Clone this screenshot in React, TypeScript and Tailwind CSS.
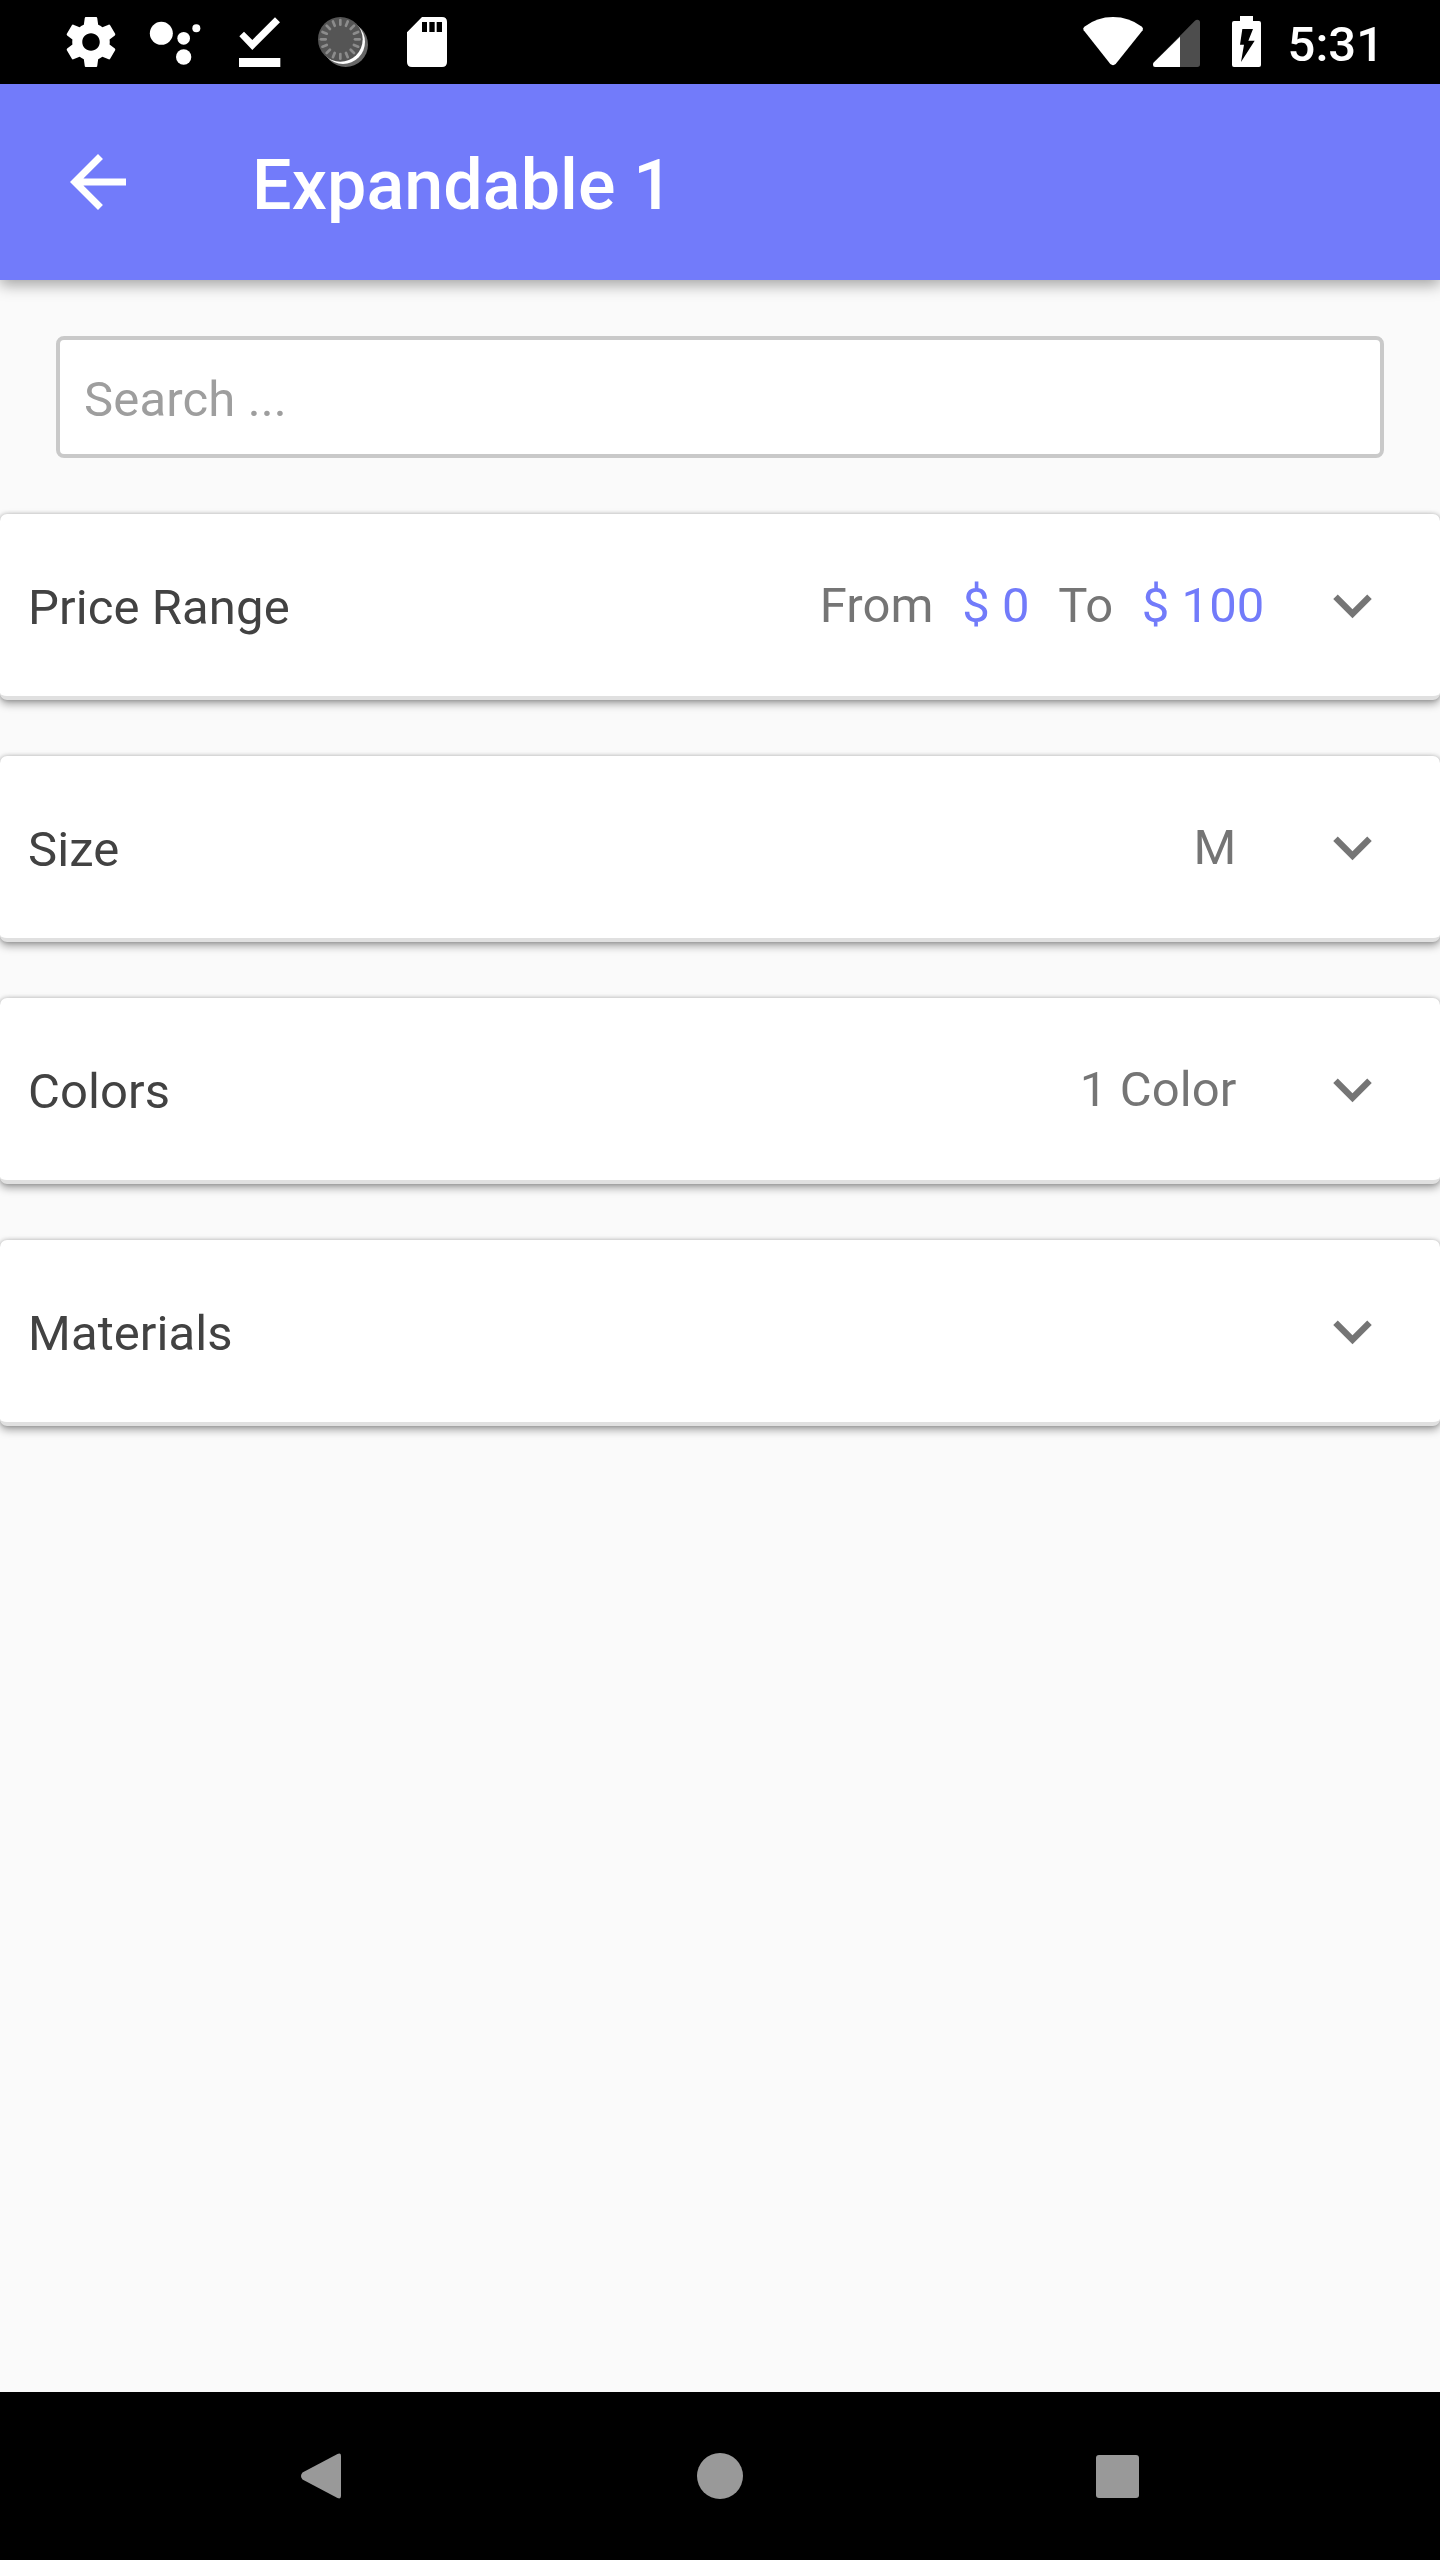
import type { ReactNode } from 'react'

function Chevron() {
  return (
    <svg viewBox="0 0 24 24" className="h-[77px] w-[77px] shrink-0" fill="#757575">
      <path d="M16.59 8.59 12 13.17 7.41 8.59 6 10l6 6 6-6z" />
    </svg>
  )
}

const ticks = Array.from({ length: 16 }, (_, i) => i * 22.5)

function StatusBar() {
  return (
    <div className="flex h-[84px] shrink-0 items-start justify-between bg-black text-white">
      <div className="flex pl-[61px] pt-3">
        <svg viewBox="0 0 24 24" className="h-[60px] w-[60px]" fill="currentColor">
          <path d="M19.43 12.98c.04-.32.07-.64.07-.98s-.03-.66-.07-.98l2.11-1.65c.19-.15.24-.42.12-.64l-2-3.46c-.12-.22-.39-.3-.61-.22l-2.49 1c-.52-.4-1.08-.73-1.69-.98l-.38-2.65C14.46 2.18 14.25 2 14 2h-4c-.25 0-.46.18-.49.42l-.38 2.65c-.61.25-1.17.59-1.69.98l-2.49-1c-.23-.09-.49 0-.61.22l-2 3.46c-.13.22-.07.49.12.64l2.11 1.65c-.04.32-.07.65-.07.98s.03.66.07.98l-2.11 1.65c-.19.15-.24.42-.12.64l2 3.46c.12.22.39.3.61.22l2.49-1c.52.4 1.08.73 1.69.98l.38 2.65c.03.24.24.42.49.42h4c.25 0 .46-.18.49-.42l.38-2.65c.61-.25 1.17-.59 1.69-.98l2.49 1c.23.09.49 0 .61-.22l2-3.46c.12-.22.07-.49-.12-.64l-2.11-1.65zM12 15.5c-1.93 0-3.5-1.57-3.5-3.5s1.57-3.5 3.5-3.5 3.5 1.57 3.5 3.5-1.57 3.5-3.5 3.5z" />
        </svg>
        <svg viewBox="243 36 249 180" className="h-[60px] w-[83px]" fill="currentColor">
          <circle cx="364" cy="100" r="34.5" />
          <circle cx="431" cy="115" r="19" />
          <circle cx="469" cy="85" r="12" />
          <circle cx="431" cy="171" r="23" />
        </svg>
        <svg viewBox="492 36 231 180" className="h-[60px] w-[77px]" fill="currentColor">
          <path d="M598 109l14-14 25 25 68-68 15 15-83 83zM597 174h124v27H597z" />
        </svg>
        <svg viewBox="723 36 279 180" className="h-[60px] w-[93px]">
          <circle cx="917" cy="134" r="67" fill="#666" />
          <circle cx="909" cy="126" r="66" fill="#fff" />
          <circle cx="901" cy="118" r="67" fill="#555" />
          {ticks.map((a) => (
            <path key={a} d="M901 60v14" stroke="#8c8c8c" strokeWidth="8" strokeLinecap="round" transform={`rotate(${a} 901 118)`} />
          ))}
        </svg>
        <svg viewBox="1002 36 279 180" className="h-[60px] w-[93px]" fill="currentColor">
          <path fillRule="evenodd" d="M1146 51h60q15 0 15 15v120q0 15-15 15h-90q-15 0-15-15V97zM1146 66v30h15V66zM1168 66v30h16V66zM1190 66v30h16V66z" />
        </svg>
      </div>
      <div className="flex pr-14 pt-3">
        <svg viewBox="60 36 201 180" className="h-[60px] w-[67px]" fill="currentColor">
          <path d="M148 192 68 91q-4-6 2-11Q108 51 156 51t87 29q5 5 2 11l-81 101q-8 7-16 0z" />
        </svg>
        <svg viewBox="261 36 219 180" className="h-[60px] w-[73px]" fill="currentColor">
          <path d="M279 187 401 63q4-4 8-4 8 0 8 8v126q0 8-8 8H283q-7 0-7-7 0-4 3-7z" fill="#4d4d4d" />
          <path d="M279 187l78-77v91h-74q-7 0-7-7 0-4 3-7z" />
        </svg>
        <svg viewBox="480 36 201 180" className="h-[60px] w-[67px]" fill="currentColor">
          <path fillRule="evenodd" d="M537 48h39v15h18q6 0 6 6v126q0 6-6 6h-75q-6 0-6-6V69q0-6 6-6h18zM544 87l-7 47h12l-9 52 41-64h-19l14-35z" />
        </svg>
        <span className="mt-1 text-[49px] font-medium leading-[57px] tracking-normal">5:31</span>
      </div>
    </div>
  )
}

function Row({ title, children }: { title: string; children?: ReactNode }) {
  return (
    <div className="flex h-[186px] items-center rounded-[7px] border-b-4 border-[#e0e0e0] bg-white pl-7 pr-[49.5px] shadow-[0_4px_8px_rgba(0,0,0,0.35),0_0_4px_rgba(0,0,0,0.22)]">
      <span className="flex-1 pt-[5px] text-[#424242]">{title}</span>
      <div className="flex text-[#757575]">{children}</div>
      <Chevron />
    </div>
  )
}

export default function App() {
  return (
    <div className="flex h-[2560px] w-[1440px] flex-col overflow-hidden bg-[#fafafa] font-['Roboto',sans-serif] text-[49px] leading-[57px] tracking-[0.1px]">
      <StatusBar />
      <header className="flex h-[196px] shrink-0 items-center bg-[#727bfa] pl-14 text-white shadow-[0_5px_14px_rgba(0,0,0,0.35)]">
        <svg viewBox="0 0 24 24" className="h-[84px] w-[84px]" fill="currentColor">
          <path d="M20 11H7.83l5.59-5.59L12 4l-8 8 8 8 1.41-1.41L7.83 13H20v-2z" />
        </svg>
        <h1 className="ml-28 pt-1.5 text-[70px] font-medium leading-[82px]">Expandable 1</h1>
      </header>
      <main className="flex flex-1 flex-col gap-14 pt-14">
        <div className="mx-14 flex h-[122px] items-center rounded-lg border-4 border-[#c9c9c9] bg-white px-6 pt-[5px]">
          <input className="w-full bg-transparent tracking-[0.15px] outline-none placeholder:text-[#9e9e9e]" placeholder="Search ..." />
        </div>
        <Row title="Price Range">
          <span>From</span>
          <span className="ml-[28.5px] text-[#727bfa]">$ 0</span>
          <span className="ml-[28.5px]">To</span>
          <span className="ml-[28.5px] mr-[49px] text-[#727bfa]">$ 100</span>
        </Row>
        <Row title="Size">
          <span className="mr-[77px]">M</span>
        </Row>
        <Row title="Colors">
          <span className="mr-[77px]">1 Color</span>
        </Row>
        <Row title="Materials" />
      </main>
      <nav className="flex h-[168px] shrink-0 items-center justify-center gap-[353px] bg-black">
        <svg viewBox="0 0 43 46" className="h-[46px] w-[43px]" fill="#999">
          <path d="M1.5 19.5 36.5 1q3.500-1.500 3.500 2v40q0 3.500-3.500 2L1.500 26.500q-3-3.500 0-7z" />
        </svg>
        <div className="h-[46px] w-[46px] rounded-full bg-[#999]" />
        <div className="h-[43px] w-[43px] rounded-[3px] bg-[#999]" />
      </nav>
    </div>
  )
}
